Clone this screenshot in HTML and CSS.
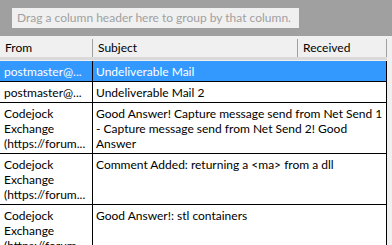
FILE: index.html
```html
<!DOCTYPE html>
<html lang="en">
<head>
    <meta charset="UTF-8">
    <title>Report Control</title>
    <link rel="stylesheet" href="styles.css">
</head>
<body>
    <div class="group-box">
        <div class="group-hint">Drag a column header here to group by that column.</div>
    </div>
    <div class="header">
        <div class="col-head from">From</div>
        <div class="col-head subject">Subject</div>
        <div class="col-head received">Received</div>
    </div>
    <div class="rows">
        <div class="row selected">
            <div class="cell from">postmaster@...</div>
            <div class="cell subject">Undeliverable Mail</div>
        </div>
        <div class="row">
            <div class="cell from">postmaster@...</div>
            <div class="cell subject">Undeliverable Mail 2</div>
        </div>
        <div class="row">
            <div class="cell from">Codejock<br>Exchange<br>(https://forum...</div>
            <div class="cell subject">Good Answer! Capture message send from Net Send 1 - Capture message send from Net Send 2! Good Answer</div>
        </div>
        <div class="row">
            <div class="cell from">Codejock<br>Exchange<br>(https://forum...</div>
            <div class="cell subject">Comment Added: returning a &lt;ma&gt; from a dll</div>
        </div>
        <div class="row">
            <div class="cell from">Codejock<br>Exchange<br>(https://forum...</div>
            <div class="cell subject">Good Answer!: stl containers</div>
        </div>
    </div>
</body>
</html>
```

FILE: styles.css
```css
body {
    margin: 0;
    font-family: Lato, "Noto Sans", sans-serif;
    font-size: 12px;
    background-color: #f0f0f0;
    color: #000;
    width: 392px;
    height: 245px;
    overflow: hidden;
}
.group-box {
    background: #a0a0a0;
    height: 36px;
    padding: 8px 0 0 12px;
    box-sizing: border-box;
}
.group-hint {
    background: #f0f0f0;
    color: #a0a0a0;
    width: 287px;
    height: 20px;
    line-height: 20px;
    padding-left: 5px;
    box-sizing: border-box;
    white-space: nowrap;
    overflow: hidden;
}
.header {
    display: flex;
    height: 24px;
    width: 387px;
    border-bottom: 3px solid #dadada;
    box-sizing: border-box;
    padding-top: 3px;
}
.col-head {
    line-height: 18px;
    padding-left: 5px;
    border-right: 1px solid #a0a0a0;
    box-sizing: border-box;
    height: 18px;
    white-space: nowrap;
}
.col-head.from { width: 93px; }
.col-head.subject { width: 205px; }
.col-head.received { width: 89px; }
.rows {
    width: 387px;
    margin-top: 1px;
    background: #fff;
    border-right: 1px solid #000;
    box-sizing: border-box;
}
.row {
    display: flex;
    border-bottom: 1px solid #000;
}
.cell {
    line-height: 15px;
    padding: 3px 0 2px 4px;
}
.cell.from {
    width: 93px;
    flex: none;
    box-sizing: border-box;
    border-right: 1px solid #000;
    white-space: nowrap;
    overflow: hidden;
}
.cell.subject {
    flex: 1;
    padding-left: 3px;
}
.row.selected {
    background: #3399ff;
    color: #fff;
}
```
